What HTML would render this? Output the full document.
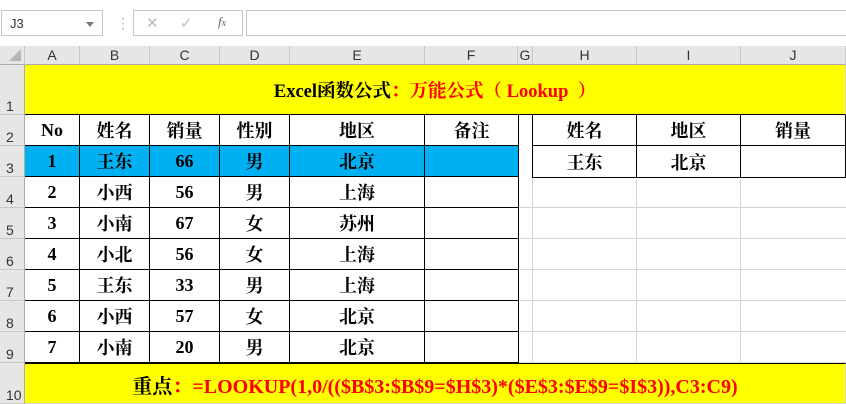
<!DOCTYPE html><html><head><meta charset="utf-8"><style>
*{margin:0;padding:0;box-sizing:border-box}
body{width:846px;height:404px;overflow:hidden;background:#fff;position:relative;font-family:"Liberation Serif","Noto Serif CJK SC",serif}
.a{position:absolute}
.tb{left:0;top:0;width:846px;height:46px;background:#fff}
.box{position:absolute;border:1px solid #c6c6c6;background:#fff}
.ch{position:absolute;top:46px;height:19px;background:#e6e6e6;border-right:1px solid #c8c8c8;border-bottom:1px solid #ababab;font:14px "Liberation Sans",sans-serif;color:#333;text-align:center;line-height:19px}
.rh{position:absolute;left:0;width:25px;background:#e6e6e6;border-right:1px solid #ababab;border-bottom:1px solid #c8c8c8;font:14px "Liberation Sans",sans-serif;color:#333;padding-left:6px;display:flex;align-items:flex-end;padding-bottom:0}
.c{position:absolute;border-right:1px solid #d4d4d4;border-bottom:1px solid #d4d4d4;display:flex;align-items:center;justify-content:center;font-weight:bold;font-size:18px;color:#000}
.k{border-color:#000}
</style></head><body>
<div class="a tb"></div>
<div class="box" style="left:1px;top:10px;width:102px;height:26px;font:13px 'Liberation Sans',sans-serif;color:#333;padding:5px 0 0 8px">J3<span style="position:absolute;right:8px;top:11px;border:4px solid transparent;border-top:5px solid #777"></span></div>
<div class="a" style="left:116px;top:15px;color:#aaa;font:14px 'Liberation Sans',sans-serif">⋮</div>
<div class="box" style="left:133px;top:10px;width:110px;height:26px;font:15px 'Liberation Sans',sans-serif;color:#bbb"><span class="a" style="left:12px;top:3px">✕</span><span class="a" style="left:46px;top:3px">✓</span><span class="a" style="left:84px;top:3px;color:#666;font:italic 13px 'Liberation Serif',serif">f<span style="font-size:10px">x</span></span></div>
<div class="box" style="left:246px;top:10px;width:610px;height:26px"></div>
<div class="ch" style="left:0;width:25px"><span style="position:absolute;right:3px;bottom:3px;border-left:12px solid transparent;border-bottom:12px solid #b5b5b5"></span></div>
<div class="ch" style="left:25px;width:55px">A</div><div class="ch" style="left:80px;width:70px">B</div><div class="ch" style="left:150px;width:70px">C</div><div class="ch" style="left:220px;width:70px">D</div><div class="ch" style="left:290px;width:135px">E</div><div class="ch" style="left:425px;width:93px">F</div><div class="ch" style="left:518px;width:15px">G</div><div class="ch" style="left:533px;width:104px">H</div><div class="ch" style="left:637px;width:104px">I</div><div class="ch" style="left:741px;width:105px">J</div>
<div class="rh" style="top:65px;height:50px">1</div><div class="rh" style="top:115px;height:31px">2</div><div class="rh" style="top:146px;height:31px">3</div><div class="rh" style="top:177px;height:31px">4</div><div class="rh" style="top:208px;height:31px">5</div><div class="rh" style="top:239px;height:31px">6</div><div class="rh" style="top:270px;height:31px">7</div><div class="rh" style="top:301px;height:31px">8</div><div class="rh" style="top:332px;height:31px">9</div><div class="rh" style="top:363px;height:41px">10</div>
<div class="a" style="left:533px;top:177px;width:313px;height:186px;background:
repeating-linear-gradient(to bottom,transparent 0 30px,#d4d4d4 30px 31px),
linear-gradient(to right,transparent 103px,#d4d4d4 103px 104px,transparent 104px 207px,#d4d4d4 207px 208px,transparent 208px)"></div>
<div class="a" style="left:518px;top:177px;width:15px;height:186px;background:repeating-linear-gradient(to bottom,transparent 0 30px,#d4d4d4 30px 31px);border-right:1px solid #d4d4d4"></div>
<div class="c" style="left:25px;top:65px;width:821px;height:50px;background:#ff0;border-bottom:1px solid #000;align-items:flex-end;padding-bottom:11px;font-size:18.5px">Excel函数公式<span style="color:#f00">：万能公式（ Lookup &nbsp;）</span></div>
<div class="c" style="left:25px;top:363px;width:821px;height:41px;background:#ff0;border-top:1px solid #000;align-items:flex-start;padding-top:6px;font-size:20px">重点<span style="color:#f00">：=LOOKUP(1,0/(($B$3:$B$9=$H$3)*($E$3:$E$9=$I$3)),C3:C9)</span></div>
<div class="a" style="left:25px;top:146px;width:493px;height:31px;background:#00b0f0"></div>
<div class="c k" style="left:25px;top:115px;width:55px;height:31px">No</div><div class="c k" style="left:80px;top:115px;width:70px;height:31px">姓名</div><div class="c k" style="left:150px;top:115px;width:70px;height:31px">销量</div><div class="c k" style="left:220px;top:115px;width:70px;height:31px">性别</div><div class="c k" style="left:290px;top:115px;width:135px;height:31px">地区</div><div class="c k" style="left:425px;top:115px;width:94px;height:31px">备注</div>
<div class="c k" style="left:25px;top:146px;width:55px;height:31px">1</div><div class="c k" style="left:80px;top:146px;width:70px;height:31px">王东</div><div class="c k" style="left:150px;top:146px;width:70px;height:31px">66</div><div class="c k" style="left:220px;top:146px;width:70px;height:31px">男</div><div class="c k" style="left:290px;top:146px;width:135px;height:31px">北京</div><div class="c k" style="left:425px;top:146px;width:94px;height:31px"></div>
<div class="c k" style="left:25px;top:177px;width:55px;height:31px">2</div><div class="c k" style="left:80px;top:177px;width:70px;height:31px">小西</div><div class="c k" style="left:150px;top:177px;width:70px;height:31px">56</div><div class="c k" style="left:220px;top:177px;width:70px;height:31px">男</div><div class="c k" style="left:290px;top:177px;width:135px;height:31px">上海</div><div class="c k" style="left:425px;top:177px;width:94px;height:31px"></div>
<div class="c k" style="left:25px;top:208px;width:55px;height:31px">3</div><div class="c k" style="left:80px;top:208px;width:70px;height:31px">小南</div><div class="c k" style="left:150px;top:208px;width:70px;height:31px">67</div><div class="c k" style="left:220px;top:208px;width:70px;height:31px">女</div><div class="c k" style="left:290px;top:208px;width:135px;height:31px">苏州</div><div class="c k" style="left:425px;top:208px;width:94px;height:31px"></div>
<div class="c k" style="left:25px;top:239px;width:55px;height:31px">4</div><div class="c k" style="left:80px;top:239px;width:70px;height:31px">小北</div><div class="c k" style="left:150px;top:239px;width:70px;height:31px">56</div><div class="c k" style="left:220px;top:239px;width:70px;height:31px">女</div><div class="c k" style="left:290px;top:239px;width:135px;height:31px">上海</div><div class="c k" style="left:425px;top:239px;width:94px;height:31px"></div>
<div class="c k" style="left:25px;top:270px;width:55px;height:31px">5</div><div class="c k" style="left:80px;top:270px;width:70px;height:31px">王东</div><div class="c k" style="left:150px;top:270px;width:70px;height:31px">33</div><div class="c k" style="left:220px;top:270px;width:70px;height:31px">男</div><div class="c k" style="left:290px;top:270px;width:135px;height:31px">上海</div><div class="c k" style="left:425px;top:270px;width:94px;height:31px"></div>
<div class="c k" style="left:25px;top:301px;width:55px;height:31px">6</div><div class="c k" style="left:80px;top:301px;width:70px;height:31px">小西</div><div class="c k" style="left:150px;top:301px;width:70px;height:31px">57</div><div class="c k" style="left:220px;top:301px;width:70px;height:31px">女</div><div class="c k" style="left:290px;top:301px;width:135px;height:31px">北京</div><div class="c k" style="left:425px;top:301px;width:94px;height:31px"></div>
<div class="c k" style="left:25px;top:332px;width:55px;height:31px">7</div><div class="c k" style="left:80px;top:332px;width:70px;height:31px">小南</div><div class="c k" style="left:150px;top:332px;width:70px;height:31px">20</div><div class="c k" style="left:220px;top:332px;width:70px;height:31px">男</div><div class="c k" style="left:290px;top:332px;width:135px;height:31px">北京</div><div class="c k" style="left:425px;top:332px;width:94px;height:31px"></div>
<div class="a" style="left:532px;top:115px;width:1px;height:63px;background:#000"></div>
<div class="c k" style="left:533px;top:115px;width:104px;height:31px">姓名</div><div class="c k" style="left:637px;top:115px;width:104px;height:31px">地区</div><div class="c k" style="left:741px;top:115px;width:105px;height:31px">销量</div>
<div class="c k" style="left:533px;top:146px;width:104px;height:32px">王东</div><div class="c k" style="left:637px;top:146px;width:104px;height:32px">北京</div><div class="c k" style="left:741px;top:146px;width:105px;height:32px"></div>
</body></html>
